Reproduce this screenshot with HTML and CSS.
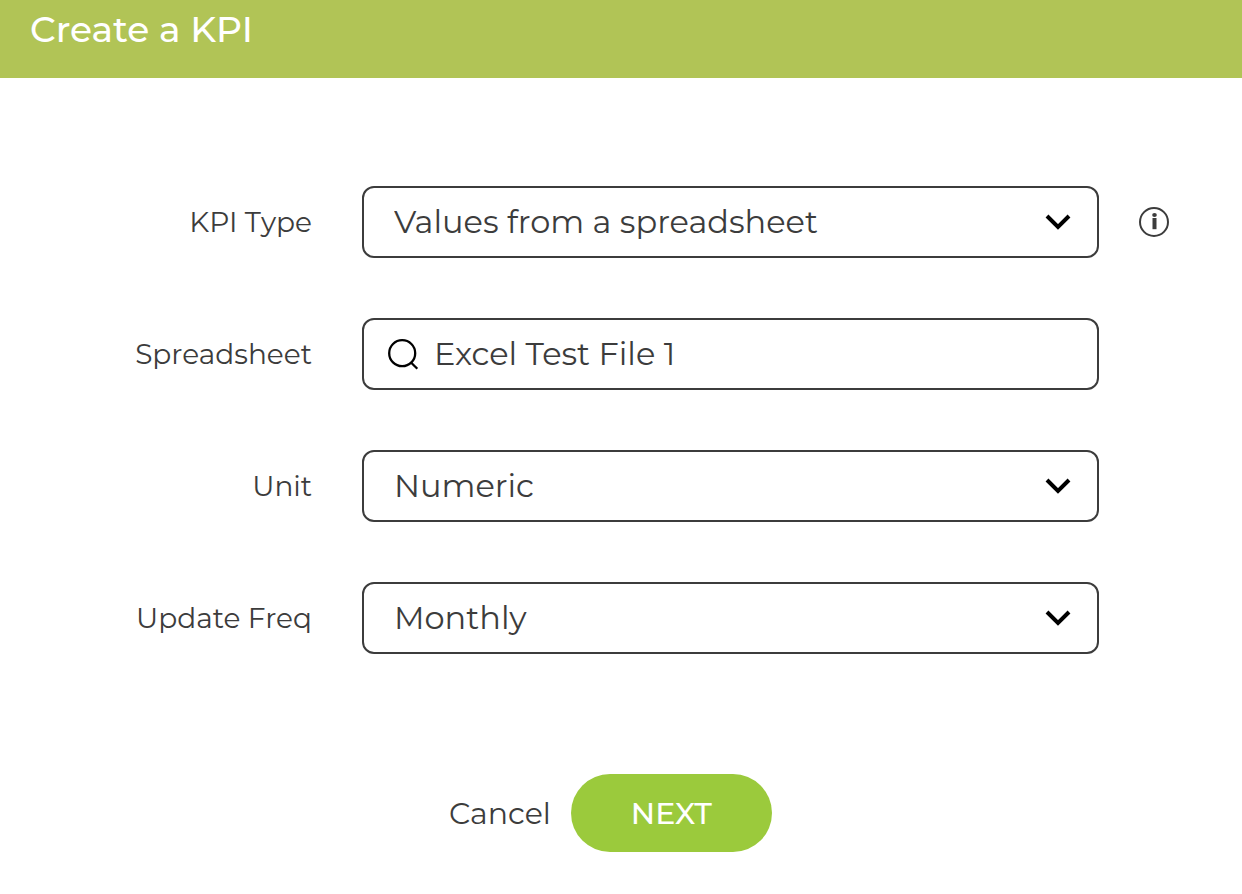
FILE: index.html
```html
<!DOCTYPE html>
<html lang="en">

<head>
    <meta charset="UTF-8">
    <meta name="viewport" content="width=device-width, initial-scale=1.0">
    <title>Create a KPI</title>
    <link rel="stylesheet" href="styles.css">
</head>

<body>
    <header class="header">
        <h1>Create a KPI</h1>
    </header>
    <form class="kpi-form">
        <div class="form-row">
            <label for="kpiType">KPI Type</label>
            <div class="control">
                <select id="kpiType" name="kpiType">
                    <option>Values from a spreadsheet</option>
                </select>
                <svg class="arrow" viewBox="0 0 26 16" aria-hidden="true">
                    <path d="M2 2 L13 13 L24 2" />
                </svg>
            </div>
            <button type="button" class="info" aria-label="About KPI types">
                <svg viewBox="0 0 30 30" aria-hidden="true">
                    <circle class="ring" cx="15" cy="15" r="14" />
                    <ellipse cx="15.5" cy="8" rx="2.3" ry="1.9" />
                    <rect x="13.5" y="11" width="4" height="11.2" />
                </svg>
            </button>
        </div>
        <div class="form-row">
            <label for="spreadsheet">Spreadsheet</label>
            <div class="control">
                <svg class="search-icon" viewBox="0 0 32 32" aria-hidden="true">
                    <circle cx="15.2" cy="15.2" r="13" />
                    <path d="M24 24.5 L30.3 30.8" />
                </svg>
                <input type="text" id="spreadsheet" name="spreadsheet" value="Excel Test File 1">
            </div>
        </div>
        <div class="form-row">
            <label for="unit">Unit</label>
            <div class="control">
                <select id="unit" name="unit">
                    <option>Numeric</option>
                </select>
                <svg class="arrow" viewBox="0 0 26 16" aria-hidden="true">
                    <path d="M2 2 L13 13 L24 2" />
                </svg>
            </div>
        </div>
        <div class="form-row">
            <label for="frequency">Update Freq</label>
            <div class="control">
                <select id="frequency" name="frequency">
                    <option>Monthly</option>
                </select>
                <svg class="arrow" viewBox="0 0 26 16" aria-hidden="true">
                    <path d="M2 2 L13 13 L24 2" />
                </svg>
            </div>
        </div>
        <div class="actions">
            <button type="button" class="cancel">Cancel</button>
            <button type="submit" class="next">NEXT</button>
        </div>
    </form>
</body>

</html>
```

FILE: styles.css
```css
* {
    box-sizing: border-box;
}

body {
    margin: 0;
    background-color: #fff;
    color: #3c3c3c;
    font-family: Montserrat, Inter, "Liberation Sans", sans-serif;
}

.header {
    padding: 8px 30px 28px;
    background-color: #b1c456;
}

.header h1 {
    margin: 0;
    color: #fff;
    font-size: 36px;
    font-weight: 500;
    line-height: 42px;
}

.kpi-form {
    padding: 108px 73px 42px 0;
}

.form-row {
    display: grid;
    grid-template-columns: 312px 1fr 30px;
    align-items: center;
    margin-bottom: 60px;
}

.form-row label {
    font-size: 28px;
    line-height: 36px;
    text-align: right;
}

.control {
    position: relative;
    margin: 0 40px 0 50px;
}

.control select,
.control input {
    display: block;
    width: 100%;
    height: 72px;
    padding: 0 72px 2px 30px;
    border: 2px solid #3c3c3c;
    border-radius: 12px;
    background-color: #fff;
    color: inherit;
    font-family: inherit;
    font-size: 32px;
    appearance: none;
}

.control input {
    padding: 0 24px 2px 70px;
}

/* icons inside the fields */
.arrow {
    position: absolute;
    top: 28px;
    right: 28px;
    width: 26px;
    height: 16px;
    fill: none;
    stroke: #000;
    stroke-width: 4;
    pointer-events: none;
}

.search-icon {
    position: absolute;
    top: 20px;
    left: 25px;
    width: 32px;
    height: 32px;
    fill: none;
    stroke: #000;
    stroke-width: 2.3;
    pointer-events: none;
}

button {
    padding: 0;
    border: 0;
    background: none;
    color: inherit;
    font-family: inherit;
    cursor: pointer;
}

.info svg {
    display: block;
    width: 30px;
    height: 30px;
    fill: #3c3c3c;
}

.info .ring {
    fill: none;
    stroke: #3c3c3c;
    stroke-width: 2;
}

.actions {
    display: flex;
    justify-content: center;
    align-items: center;
    gap: 20px;
    margin-top: 120px;
    padding-left: 52px;
}

.cancel {
    font-size: 30px;
}

.next {
    width: 201px;
    height: 78px;
    border-radius: 39px;
    background-color: #9bca3c;
    color: #fff;
    font-size: 30px;
    font-weight: 500;
}
```
